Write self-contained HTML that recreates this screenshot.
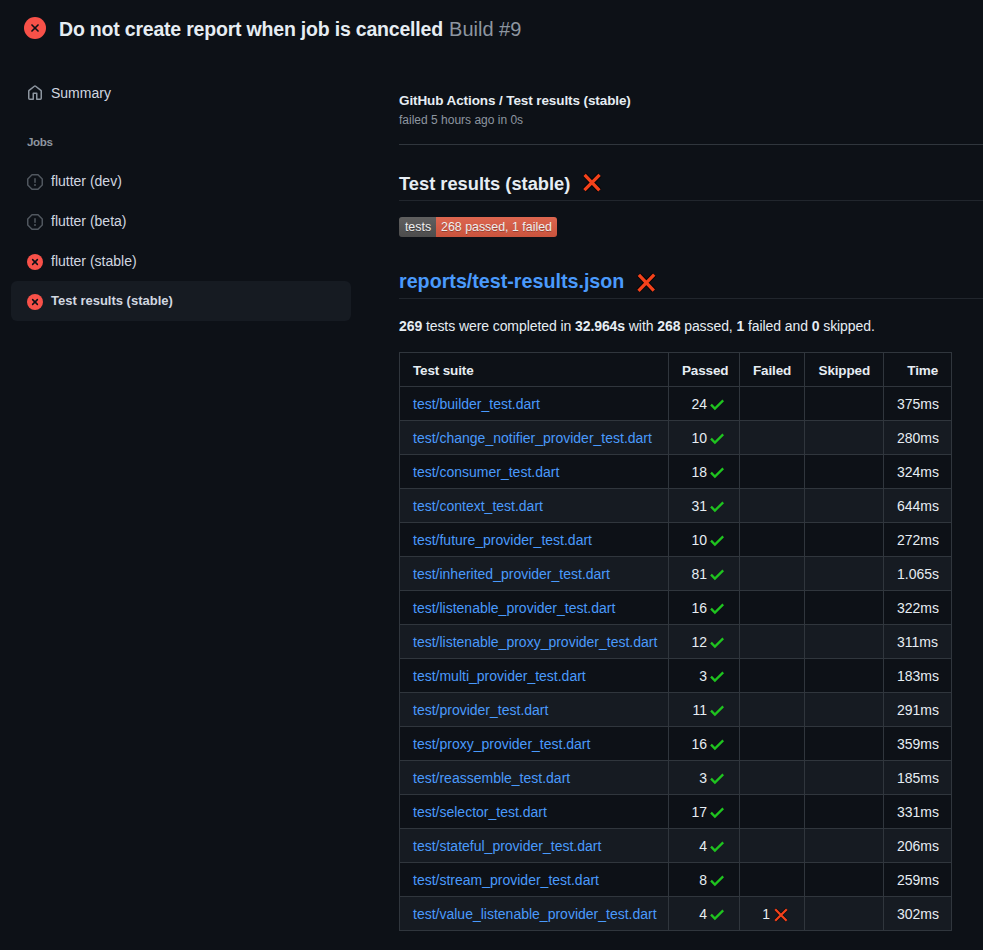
<!DOCTYPE html>
<html><head><meta charset="utf-8">
<style>
html,body{margin:0;padding:0;background:#0d1117;width:983px;height:950px;overflow:hidden;}
body{font-family:"Liberation Sans",sans-serif;color:#e6edf3;position:relative;}
.a{position:absolute;white-space:nowrap;}
.title{left:59px;top:17px;font-size:19.5px;line-height:24px;font-weight:700;letter-spacing:-0.2px;}
.title .b{font-weight:400;color:#8d96a0;font-size:20px;margin-left:1px;letter-spacing:0px;}
.side{font-size:14px;line-height:20px;color:#d1d7e0;}
.jobs{left:27px;top:133px;font-size:11.6px;line-height:18px;font-weight:700;color:#8d96a0;letter-spacing:-0.4px;}
.sel{left:11px;top:281px;width:340px;height:40px;background:#161b22;border-radius:6px;}
.ico{position:absolute;}
.hdr1{left:399px;top:90.5px;font-size:13.5px;line-height:20px;font-weight:700;letter-spacing:-0.1px;}
.hdr2{left:399px;top:111px;font-size:12px;line-height:18px;color:#8d96a0;}
.hr{position:absolute;height:1px;background:#30363d;}
.h2a{left:399px;top:172px;font-size:18.3px;line-height:24px;font-weight:700;}
.h2b{left:399px;top:269px;font-size:19.7px;line-height:24px;font-weight:700;color:#4a9afc;}
.para{left:399px;top:316px;font-size:14px;line-height:20px;letter-spacing:-0.08px;}
.para b{font-weight:700;}
table{position:absolute;left:399px;top:352px;border-collapse:collapse;table-layout:fixed;width:553px;font-size:14px;}
td,th{border:1px solid #30363d;padding:7px 13px 5px;line-height:21px;height:21px;white-space:nowrap;overflow:visible;}
th{font-weight:700;text-align:right;font-size:13.5px;letter-spacing:-0.15px;}
th:first-child{text-align:left;}
td{text-align:right;}
td:first-child{text-align:left;color:#4a9afc;}
tr:nth-child(odd) td{background:#161b22;}
.ck{display:inline-block;width:14px;height:12px;margin-left:3px;margin-right:2px;vertical-align:-2px;}
.badge{position:absolute;width:158px;left:399px;top:217px;height:20px;font-family:"Liberation Sans",sans-serif;font-size:12.4px;text-shadow:0 1px 0 rgba(1,1,1,.3);line-height:20px;color:#fff;border-radius:3px;overflow:hidden;display:flex;}
.badge span{display:block;height:20px;}
</style></head><body>

<!-- Title -->
<svg class="ico" style="left:24px;top:17px" width="22" height="22" viewBox="0 0 22 22"><circle cx="11" cy="11" r="11" fill="#f85149"/><g transform="rotate(45 11 11)" fill="#0d1117"><rect x="5.9" y="10.2" width="10.2" height="1.6" rx=".8"/><rect x="10.2" y="5.9" width="1.6" height="10.2" rx=".8"/></g></svg>
<div class="a title">Do not create report when job is cancelled <span class="b">Build #9</span></div>

<!-- Sidebar -->
<svg class="ico" style="left:27px;top:85px" width="16" height="16" viewBox="0 0 16 16"><path fill="#8d96a0" d="M6.906.664a1.749 1.749 0 0 1 2.187 0l5.25 4.2c.415.332.657.835.657 1.367v7.019A1.75 1.75 0 0 1 13.25 15h-3.5a.75.75 0 0 1-.75-.75V9H7v5.25a.75.75 0 0 1-.75.75h-3.5A1.75 1.75 0 0 1 1 13.25V6.23c0-.531.242-1.034.657-1.366l5.25-4.2Zm1.25 1.171a.25.25 0 0 0-.312 0l-5.25 4.2a.25.25 0 0 0-.094.196v7.019c0 .138.112.25.25.25H5.5V8.25a.75.75 0 0 1 .75-.75h3.5a.75.75 0 0 1 .75.75v5.25h2.75a.25.25 0 0 0 .25-.25V6.23a.25.25 0 0 0-.094-.195Z"/></svg>
<div class="a side" style="left:51px;top:83px">Summary</div>
<div class="a jobs">Jobs</div>

<div class="a sel"></div>

<svg class="ico" style="left:27px;top:174px" width="16" height="16" viewBox="0 0 16 16"><path fill="#50575f" d="M4.47.22A.749.749 0 0 1 5 0h6c.199 0 .389.079.53.22l4.25 4.25c.141.14.22.331.22.53v6a.749.749 0 0 1-.22.53l-4.25 4.25A.749.749 0 0 1 11 16H5a.749.749 0 0 1-.53-.22L.22 11.53A.749.749 0 0 1 0 11V5c0-.199.079-.389.22-.53Zm.84 1.28L1.5 5.31v5.38l3.81 3.81h5.38l3.81-3.81V5.31L10.69 1.5ZM8 4a.75.75 0 0 1 .75.75v3.5a.75.75 0 0 1-1.5 0v-3.5A.75.75 0 0 1 8 4Zm0 8a1 1 0 1 1 0-2 1 1 0 0 1 0 2Z"/></svg>
<div class="a side" style="left:51px;top:171px">flutter (dev)</div>

<svg class="ico" style="left:27px;top:214px" width="16" height="16" viewBox="0 0 16 16"><path fill="#50575f" d="M4.47.22A.749.749 0 0 1 5 0h6c.199 0 .389.079.53.22l4.250 4.25c.141.14.22.331.22.53v6a.749.749 0 0 1-.22.53l-4.25 4.25A.749.749 0 0 1 11 16H5a.749.749 0 0 1-.53-.22L.22 11.53A.749.749 0 0 1 0 11V5c0-.199.079-.389.22-.53Zm.84 1.28L1.5 5.31v5.38l3.81 3.81h5.38l3.81-3.81V5.31L10.69 1.5ZM8 4a.75.75 0 0 1 .75.75v3.5a.75.75 0 0 1-1.5 0v-3.5A.75.75 0 0 1 8 4Zm0 8a1 1 0 1 1 0-2 1 1 0 0 1 0 2Z"/></svg>
<div class="a side" style="left:51px;top:211px">flutter (beta)</div>

<svg class="ico" style="left:27px;top:254px" width="16" height="16" viewBox="0 0 16 16"><circle cx="8" cy="8" r="8" fill="#f85149"/><path d="M5.6 5.6L10.4 10.4M10.4 5.6L5.6 10.4" stroke="#0d1117" stroke-width="1.5" stroke-linecap="round"/></svg>
<div class="a side" style="left:51px;top:251px">flutter (stable)</div>

<svg class="ico" style="left:27px;top:294px" width="16" height="16" viewBox="0 0 16 16"><circle cx="8" cy="8" r="8" fill="#f85149"/><path d="M5.6 5.6L10.4 10.4M10.4 5.6L5.6 10.4" stroke="#0d1117" stroke-width="1.5" stroke-linecap="round"/></svg>
<div class="a side" style="left:51px;top:291px;font-weight:700;font-size:13px">Test results (stable)</div>

<!-- Main -->
<div class="a hdr1">GitHub Actions / Test results (stable)</div>
<div class="a hdr2">failed 5 hours ago in 0s</div>
<div class="hr" style="left:399px;top:144px;width:584px"></div>

<div class="a h2a">Test results (stable)</div>
<svg class="ico" style="left:580px;top:171px" width="24" height="24" viewBox="0 0 24 24"><path d="M4.6 3.8L19.4 19.4M19.6 3.8L4.4 19.2" stroke="#000" stroke-opacity=".7" stroke-width="5.2"/><path d="M4.6 3.8L19.4 19.4M19.6 3.8L4.4 19.2" stroke="#f4421b" stroke-width="3.3"/></svg>
<div class="hr" style="left:399px;top:200px;width:584px;background:#21262d"></div>

<div class="badge"><span style="background:#555;width:36px;padding-left:1px;text-align:center">tests</span><span style="background:#e05d44;width:121px;text-align:center">268 passed, 1 failed</span><i style="position:absolute;left:0;top:0;right:0;bottom:0;background:linear-gradient(rgba(187,187,187,.1),rgba(0,0,0,.1))"></i></div>

<div class="a h2b">reports/test-results.json</div>
<svg class="ico" style="left:634px;top:271px" width="24" height="24" viewBox="0 0 24 24"><path d="M4.9 3.8L19.8 19.6M20.2 3.6L4.5 19.8" stroke="#000" stroke-opacity=".7" stroke-width="5.2"/><path d="M4.9 3.8L19.8 19.6M20.2 3.6L4.5 19.8" stroke="#f4421b" stroke-width="3.3"/></svg>
<div class="hr" style="left:399px;top:298px;width:584px;background:#21262d"></div>

<div class="a para"><b>269</b> tests were completed in <b>32.964s</b> with <b>268</b> passed, <b>1</b> failed and <b>0</b> skipped.</div>

<table>
<colgroup><col style="width:269px"><col style="width:71px"><col style="width:65px"><col style="width:79px"><col style="width:68px"></colgroup>
<tr><th>Test suite</th><th>Passed</th><th>Failed</th><th>Skipped</th><th>Time</th></tr>
<tr><td>test/builder_test.dart</td><td>24<svg class="ck" viewBox="0 0 14 12"><path d="M1 5.6L4.9 9.6L13.2 1.4" fill="none" stroke="#1fc41f" stroke-width="2.3"/></svg></td><td></td><td></td><td>375ms</td></tr>
<tr><td>test/change_notifier_provider_test.dart</td><td>10<svg class="ck" viewBox="0 0 14 12"><path d="M1 5.6L4.9 9.6L13.2 1.4" fill="none" stroke="#1fc41f" stroke-width="2.3"/></svg></td><td></td><td></td><td>280ms</td></tr>
<tr><td>test/consumer_test.dart</td><td>18<svg class="ck" viewBox="0 0 14 12"><path d="M1 5.6L4.9 9.6L13.2 1.4" fill="none" stroke="#1fc41f" stroke-width="2.3"/></svg></td><td></td><td></td><td>324ms</td></tr>
<tr><td>test/context_test.dart</td><td>31<svg class="ck" viewBox="0 0 14 12"><path d="M1 5.6L4.9 9.6L13.2 1.4" fill="none" stroke="#1fc41f" stroke-width="2.3"/></svg></td><td></td><td></td><td>644ms</td></tr>
<tr><td>test/future_provider_test.dart</td><td>10<svg class="ck" viewBox="0 0 14 12"><path d="M1 5.6L4.9 9.6L13.2 1.4" fill="none" stroke="#1fc41f" stroke-width="2.3"/></svg></td><td></td><td></td><td>272ms</td></tr>
<tr><td>test/inherited_provider_test.dart</td><td>81<svg class="ck" viewBox="0 0 14 12"><path d="M1 5.6L4.9 9.6L13.2 1.4" fill="none" stroke="#1fc41f" stroke-width="2.3"/></svg></td><td></td><td></td><td>1.065s</td></tr>
<tr><td>test/listenable_provider_test.dart</td><td>16<svg class="ck" viewBox="0 0 14 12"><path d="M1 5.6L4.9 9.6L13.2 1.4" fill="none" stroke="#1fc41f" stroke-width="2.3"/></svg></td><td></td><td></td><td>322ms</td></tr>
<tr><td>test/listenable_proxy_provider_test.dart</td><td>12<svg class="ck" viewBox="0 0 14 12"><path d="M1 5.6L4.9 9.6L13.2 1.4" fill="none" stroke="#1fc41f" stroke-width="2.3"/></svg></td><td></td><td></td><td>311ms</td></tr>
<tr><td>test/multi_provider_test.dart</td><td>3<svg class="ck" viewBox="0 0 14 12"><path d="M1 5.6L4.9 9.6L13.2 1.4" fill="none" stroke="#1fc41f" stroke-width="2.3"/></svg></td><td></td><td></td><td>183ms</td></tr>
<tr><td>test/provider_test.dart</td><td>11<svg class="ck" viewBox="0 0 14 12"><path d="M1 5.6L4.9 9.6L13.2 1.4" fill="none" stroke="#1fc41f" stroke-width="2.3"/></svg></td><td></td><td></td><td>291ms</td></tr>
<tr><td>test/proxy_provider_test.dart</td><td>16<svg class="ck" viewBox="0 0 14 12"><path d="M1 5.6L4.9 9.6L13.2 1.4" fill="none" stroke="#1fc41f" stroke-width="2.3"/></svg></td><td></td><td></td><td>359ms</td></tr>
<tr><td>test/reassemble_test.dart</td><td>3<svg class="ck" viewBox="0 0 14 12"><path d="M1 5.6L4.9 9.6L13.2 1.4" fill="none" stroke="#1fc41f" stroke-width="2.3"/></svg></td><td></td><td></td><td>185ms</td></tr>
<tr><td>test/selector_test.dart</td><td>17<svg class="ck" viewBox="0 0 14 12"><path d="M1 5.6L4.9 9.6L13.2 1.4" fill="none" stroke="#1fc41f" stroke-width="2.3"/></svg></td><td></td><td></td><td>331ms</td></tr>
<tr><td>test/stateful_provider_test.dart</td><td>4<svg class="ck" viewBox="0 0 14 12"><path d="M1 5.6L4.9 9.6L13.2 1.4" fill="none" stroke="#1fc41f" stroke-width="2.3"/></svg></td><td></td><td></td><td>206ms</td></tr>
<tr><td>test/stream_provider_test.dart</td><td>8<svg class="ck" viewBox="0 0 14 12"><path d="M1 5.6L4.9 9.6L13.2 1.4" fill="none" stroke="#1fc41f" stroke-width="2.3"/></svg></td><td></td><td></td><td>259ms</td></tr>
<tr><td>test/value_listenable_provider_test.dart</td><td>4<svg class="ck" viewBox="0 0 14 12"><path d="M1 5.6L4.9 9.6L13.2 1.4" fill="none" stroke="#1fc41f" stroke-width="2.3"/></svg></td><td>1<svg class="ck" style="width:14px;height:14px;margin-left:4px;margin-right:3px;vertical-align:-3px" viewBox="0 0 14 14"><path d="M1.2 1.2L12.6 12.8M12.8 1.2L1.2 12.8" fill="none" stroke="#000" stroke-opacity=".6" stroke-width="3.6"/><path d="M1.2 1.2L12.6 12.8M12.8 1.2L1.2 12.8" fill="none" stroke="#f4421b" stroke-width="2.3"/></svg></td><td></td><td>302ms</td></tr>
</table>

</body></html>
